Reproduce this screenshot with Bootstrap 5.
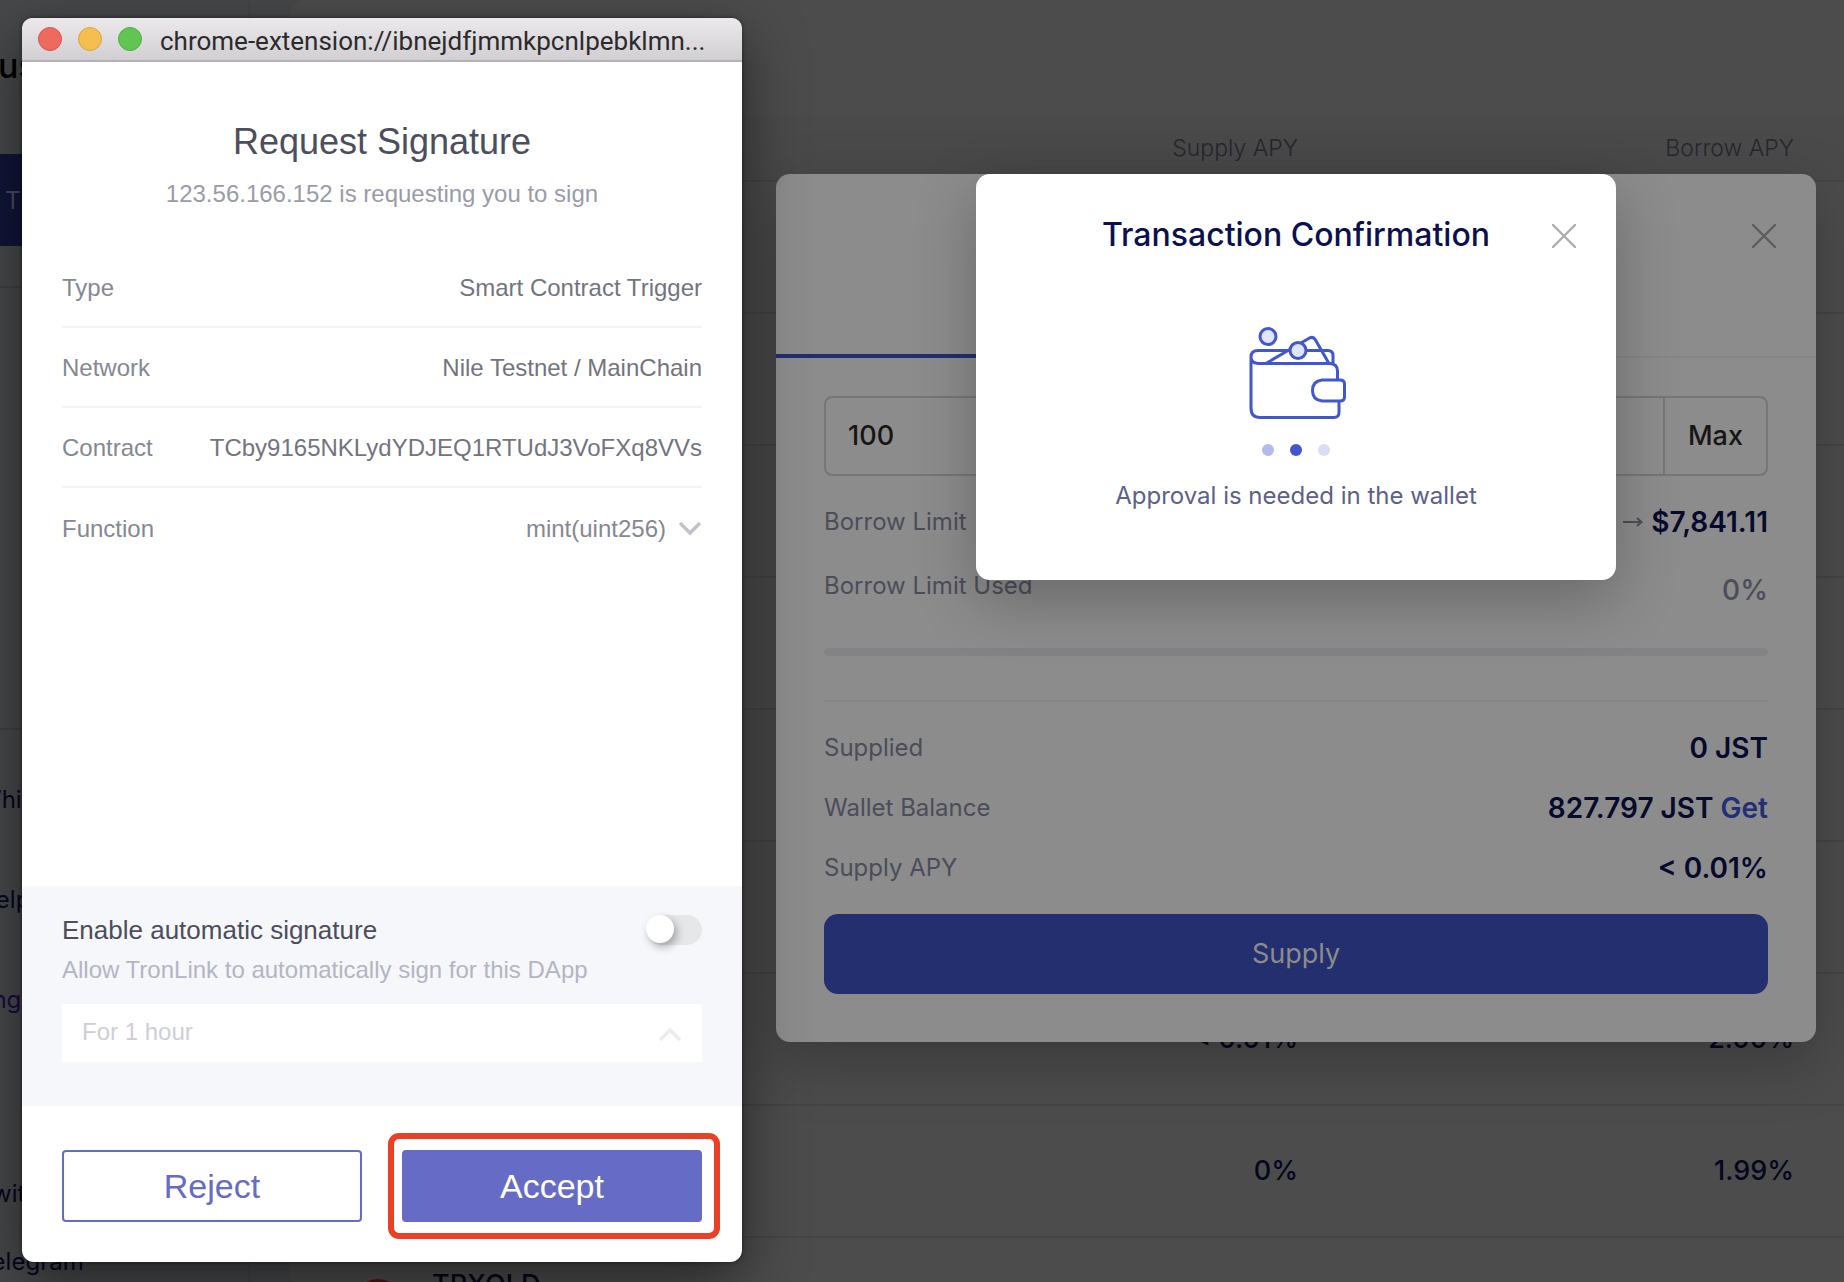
<!DOCTYPE html>
<html lang="en">
<head>
<meta charset="utf-8">
<meta name="viewport" content="width=device-width, initial-scale=1">
<title>Supply JST</title>
<link href="https://cdn.jsdelivr.net/npm/bootstrap@5.3.0/dist/css/bootstrap.min.css" rel="stylesheet">
<style>
  body { font-family: Inter, "Liberation Sans", sans-serif; font-size: 24px; line-height: 32px; background: #47484a; color: #05071d; }
  .stage { height: 100vh; min-height: 900px; }

  /* dimmed page */
  .side { width: 272px; margin-left: -22px; border-right: 2px solid #434446; }
  .side-brand { font-size: 34px; line-height: 40px; padding: 46px 0 0 20px; color: #000; font-weight: 500; }
  .side-account { height: 92px; margin-top: 68px; background: #101538; color: #4b4d57; border: 0; border-radius: 0; text-align: left; padding: 2px 0 0 27px; font-size: 24px; }
  .side-top { height: 288px; border-bottom: 2px solid #3f4042; }
  .side-mid { height: 442px; border-bottom: 2px solid #3f4042; }
  .side-links { padding-top: 54px; gap: 68px; }
  .side-links a { color: #05071d; text-decoration: none; }
  .side-links a.lang { color: #180a3f; }
  .side-social { margin-top: 94px; gap: 36px; }
  .market { margin-left: 40px; background: #4c4c4c; border-top-left-radius: 16px; }
  .market table { width: 100%; margin-top: 115px; table-layout: fixed; }
  .market th { height: 66px; background: #4a4a4a; font-weight: 300; font-size: 23px; color: #26272f; }
  .market th, .market td { border-bottom: 2px solid #454545; text-align: right; padding: 0; vertical-align: middle; }
  .market td { height: 132px; font-size: 27px; font-weight: 500; }
  .market .col-supply { width: 400px; }
  .market .col-borrow { width: 496px; }
  .market .col-end { width: 50px; }
  .coin { width: 48px; height: 48px; margin-left: 64px; border-radius: 50%; border: 3px solid #4a1814; }
  .coin-name { margin-left: 30px; padding-bottom: 36px; }

  /* dialogs */
  .dialogs { inset: 0; padding: 174px 0 0 748px; }
  .sheet { width: 1040px; border-radius: 14px; background: #8c8c8c; box-shadow: 0 20px 60px rgba(0,0,0,.25); }
  .x-btn { border: 0; background: none; padding: 0; line-height: 0; }
  .sheet-head { height: 184px; padding: 50px 40px 0 0; border-bottom: 2px solid #858585; }
  .tab-mark { height: 4px; margin-top: -4px; width: 50%; background: #222e70; }
  .sheet-body { padding: 38px 48px 48px; }
  .amount { height: 80px; border: 2px solid #767676; border-radius: 8px; }
  .amount input { border: 0; background: none; padding: 0 22px; font-size: 27px; font-weight: 500; color: #161616; min-width: 0; }
  .amount button { width: 103px; border: 0; border-left: 2px solid #767676; background: none; font-size: 27px; color: #161616; font-weight: 500; }
  .line-item { height: 60px; color: #4b4d5a; }
  .figure-val { font-size: 28px; font-weight: 600; color: #070a2b; }
  .figure-dim { font-size: 28px; font-weight: 500; color: #4b4d5a; }
  .figure-val a { color: #232f75; text-decoration: none; }
  .limits { margin-top: 14px; height: 158px; }
  .limits .line-item { height: 64px; }
  .progress { height: 8px; border-radius: 4px; background: #838385; }
  .totals { margin-top: 44px; border-top: 2px solid #858586; padding-top: 16px; }
  .supply-btn { height: 80px; margin-top: 16px; border: 0; border-radius: 14px; background: #232f6f; color: #8c8c8c; font-size: 27px; }
  .confirm { top: 174px; left: 748px; right: 0; }
  .confirm-box { width: 640px; height: 406px; border-radius: 14px; background: #fff; box-shadow: 0 20px 60px rgba(0,0,0,.25); padding: 41px 40px 0; }
  .confirm-box h2 { font-size: 32px; line-height: 40px; font-weight: 500; color: #0b1150; margin: 0; }
  .confirm-box p { margin: 0; padding-top: 18px; color: #5b608c; }
  .confirm-x { top: 50px; right: 40px; }
  .wallet { margin-top: 71px; }

  /* wallet extension window */
  .ext { left: 22px; top: 18px; width: 720px; height: 1244px; border-radius: 12px; background: #fff; box-shadow: 0 20px 60px rgba(0,0,0,.5), 0 0 4px rgba(0,0,0,.5); font-family: "Liberation Sans", sans-serif; color: #73747f; }
  .ext-bar { height: 44px; padding: 0 16px; background: linear-gradient(#ebe9eb, #d1cfd2); border-bottom: 2px solid #b3b1b5; border-radius: 10px 10px 0 0; font-family: Roboto, sans-serif; font-size: 26px; color: #2b2b2d; }
  .ext-bar .ext-url { padding: 3px 0 0 2px; }
  .light { width: 24px; height: 24px; border-radius: 50%; border: 1px solid; }
  .light-r { background: #ee6a5f; border-color: #d75549; }
  .light-y { background: #f5bf4f; border-color: #d9a43e; }
  .light-g { background: #61c554; border-color: #52ab46; }
  .ext-head { padding-top: 58px; height: 186px; text-align: center; }
  .ext-head h1 { font-size: 36px; line-height: 44px; font-weight: 400; color: #4c4e5c; margin: 0; }
  .ext-head p { margin: 14px 0 0; color: #9a9ba9; }
  .ext-rows { margin: 0 40px; }
  .ext-row { height: 80px; border-bottom: 2px solid #f3f4f6; padding-top: 2px; }
  .ext-row:last-child { border-bottom: 0; }
  .ext-row dt { font-weight: 400; color: #858894; }
  .ext-row button { border: 0; background: none; padding: 0; color: #858894; }
  .auto { height: 220px; padding: 28px 40px 0; background: #f6f7fa; }
  .auto label { font-size: 26px; color: #4c4e5c; }
  .auto p { margin: 8px 0 18px; color: #b4b5c4; }
  .toggle { appearance: none; width: 56px; height: 30px; border-radius: 15px; background: #e6e7e9; }
  .toggle::before { content: ""; display: block; width: 28px; height: 28px; border-radius: 50%; background: #fff; box-shadow: 3px 4px 8px rgba(0,0,0,.3); }
  .term { appearance: none; width: 100%; height: 58px; border: 0; background: #fff; color: #cdced6; padding: 0 20px 2px; opacity: 1; }
  .term-arrow { right: 20px; top: 22px; }
  .ext-foot { padding: 44px 40px 40px; gap: 40px; }
  .ext-foot > * { flex: 1 1 0; }
  .ext-foot button { height: 72px; width: 100%; border: 2px solid #666cc6; border-radius: 4px; font-size: 34px; background: #fff; color: #666cc6; }
  .ext-foot .accept { background: #666cc6; color: #fff; }
  .ringed::after { content: ""; position: absolute; inset: -17px -18px -17px -14px; border: 6px solid #ea4027; border-radius: 11px; pointer-events: none; }
</style>
</head>
<body>
<div class="stage position-relative overflow-hidden">

  <div class="d-flex h-100">
    <nav class="side flex-shrink-0">
      <div class="side-top d-flex flex-column">
        <div class="side-brand">us</div>
        <button class="side-account" type="button">T</button>
      </div>
      <div class="side-mid"></div>
      <div class="side-links d-flex flex-column">
        <a href="#">Whitepaper</a>
        <a href="#">Help</a>
        <a href="#" class="lang">English</a>
        <div class="side-social d-flex flex-column">
          <a href="#">Twitter</a>
          <a href="#">Telegram</a>
        </div>
      </div>
    </nav>
    <main class="market flex-grow-1">
      <table>
        <colgroup><col><col class="col-supply"><col class="col-borrow"><col class="col-end"></colgroup>
        <thead><tr><th></th><th>Supply APY</th><th>Borrow APY</th><th></th></tr></thead>
        <tbody>
          <tr><td></td><td></td><td></td><td></td></tr>
          <tr><td></td><td></td><td></td><td></td></tr>
          <tr><td></td><td></td><td></td><td></td></tr>
          <tr><td></td><td></td><td></td><td></td></tr>
          <tr><td></td><td></td><td></td><td></td></tr>
          <tr><td></td><td></td><td></td><td></td></tr>
          <tr><td></td><td>&lt; 0.01%</td><td>2.00%</td><td></td></tr>
          <tr><td></td><td>0%</td><td>1.99%</td><td></td></tr>
          <tr><td><div class="d-flex align-items-center"><span class="coin"></span><span class="coin-name">TRXOLD</span></div></td><td></td><td></td><td></td></tr>
        </tbody>
      </table>
    </main>
  </div>

  <div class="dialogs position-absolute d-flex justify-content-center align-items-start">
    <section class="sheet">
      <div class="sheet-head d-flex justify-content-end align-items-start">
        <button class="x-btn" type="button" aria-label="Close"><svg width="24" height="24" viewBox="0 0 24 24" stroke="#5e5e5e" stroke-width="2.4" stroke-linecap="round"><path d="M1 1l22 22M23 1L1 23"/></svg></button>
      </div>
      <div class="tab-mark"></div>
      <div class="sheet-body">
        <div class="amount d-flex">
          <input class="flex-grow-1" type="text" value="100" aria-label="Amount">
          <button type="button">Max</button>
        </div>
        <div class="limits">
          <div class="line-item d-flex justify-content-between align-items-center"><span>Borrow Limit</span>
            <span class="figure-val d-flex align-items-center gap-2"><svg width="20" height="10" viewBox="0 0 20 10" fill="none" stroke="#4b4d5a" stroke-width="2"><path d="M0 5h18M14 1l4.500 4-4.500 4"/></svg>$7,841.11</span></div>
          <div class="line-item d-flex justify-content-between align-items-center"><span>Borrow Limit Used</span><span class="figure-dim pt-2">0%</span></div>
        </div>
        <div class="progress" role="progressbar" aria-label="Borrow limit used" aria-valuenow="0" aria-valuemin="0" aria-valuemax="100"></div>
        <div class="totals">
          <div class="line-item d-flex justify-content-between align-items-center"><span>Supplied</span><span class="figure-val">0 JST</span></div>
          <div class="line-item d-flex justify-content-between align-items-center"><span>Wallet Balance</span><span class="figure-val">827.797 JST <a href="#">Get</a></span></div>
          <div class="line-item d-flex justify-content-between align-items-center"><span>Supply APY</span><span class="figure-val">&lt; 0.01%</span></div>
        </div>
        <button class="supply-btn w-100" type="button">Supply</button>
      </div>
    </section>
  </div>

  <div class="confirm position-absolute d-flex justify-content-center">
    <section class="confirm-box position-relative text-center">
      <h2>Transaction Confirmation</h2>
      <button class="x-btn confirm-x position-absolute" type="button" aria-label="Close"><svg width="24" height="24" viewBox="0 0 24 24" stroke="#adadad" stroke-width="2.4" stroke-linecap="round"><path d="M1 1l22 22M23 1L1 23"/></svg></button>
      <svg class="wallet d-block mx-auto" width="100" height="136" viewBox="0 0 100 136" fill="none" stroke="#4057d0" stroke-width="3" stroke-linejoin="round">
        <path d="M5 31V82Q5 91.500 14 91.500H88Q93 91.500 93 86.500V75M91.500 54V45Q91.500 38 84 37.500H12Q5 37 5 31Q5 24.500 12 24.500H82Q87 24.500 87 29.500V38"/>
        <path d="M19 38L63.500 12Q67 10 69.500 14L83 37.500"/>
        <path d="M76 54H94Q98.500 54 98.500 58V71Q98.500 75 94 75H76Q66.500 74 66.500 64.500Q66.500 55 76 54Z" fill="#fff"/>
        <circle cx="22" cy="10.500" r="8" fill="#e0e4fc"/>
        <circle cx="52" cy="24.500" r="8" fill="#e0e4fc"/>
        <g stroke="none"><circle cx="22" cy="124" r="6" fill="#b3bbec"/><circle cx="50" cy="124" r="6" fill="#4057d0"/><circle cx="78" cy="124" r="6" fill="#d9ddf6"/></g>
      </svg>
      <p>Approval is needed in the wallet</p>
    </section>
  </div>

  <section class="ext position-absolute d-flex flex-column">
    <div class="ext-bar d-flex align-items-center gap-3">
      <span class="light light-r flex-shrink-0"></span><span class="light light-y flex-shrink-0"></span><span class="light light-g flex-shrink-0"></span>
      <span class="ext-url text-nowrap">chrome-extension://ibnejdfjmmkpcnlpebklmn...</span>
    </div>
    <div class="ext-head">
      <h1>Request Signature</h1>
      <p>123.56.166.152 is requesting you to sign</p>
    </div>
    <dl class="ext-rows">
      <div class="ext-row d-flex justify-content-between align-items-center"><dt>Type</dt><dd class="m-0">Smart Contract Trigger</dd></div>
      <div class="ext-row d-flex justify-content-between align-items-center"><dt>Network</dt><dd class="m-0">Nile Testnet / MainChain</dd></div>
      <div class="ext-row d-flex justify-content-between align-items-center"><dt>Contract</dt><dd class="m-0">TCby9165NKLydYDJEQ1RTUdJ3VoFXq8VVs</dd></div>
      <div class="ext-row d-flex justify-content-between align-items-center"><dt>Function</dt><dd class="m-0"><button type="button" class="d-flex align-items-center">mint(uint256)<svg class="ms-2" width="28" height="16" viewBox="0 0 28 16" fill="none" stroke="#c0c1cb" stroke-width="3.5"><path d="M6 2l10 10L26 2"/></svg></button></dd></div>
    </dl>
    <div class="auto mt-auto">
      <div class="d-flex justify-content-between align-items-center"><label for="auto">Enable automatic signature</label><input class="toggle" type="checkbox" role="switch" id="auto"></div>
      <p>Allow TronLink to automatically sign for this DApp</p>
      <div class="position-relative">
        <select class="term" aria-label="Duration" disabled><option>For 1 hour</option></select>
        <svg class="term-arrow position-absolute" width="24" height="16" viewBox="0 0 24 16" fill="none" stroke="#ececef" stroke-width="3.5"><path d="M2 14L12 4l10 10"/></svg>
      </div>
    </div>
    <div class="ext-foot d-flex">
      <div><button type="button">Reject</button></div>
      <div class="ringed position-relative"><button type="button" class="accept">Accept</button></div>
    </div>
  </section>
</div>
<script src="https://cdn.jsdelivr.net/npm/bootstrap@5.3.0/dist/js/bootstrap.bundle.min.js"></script>
</body>
</html>
